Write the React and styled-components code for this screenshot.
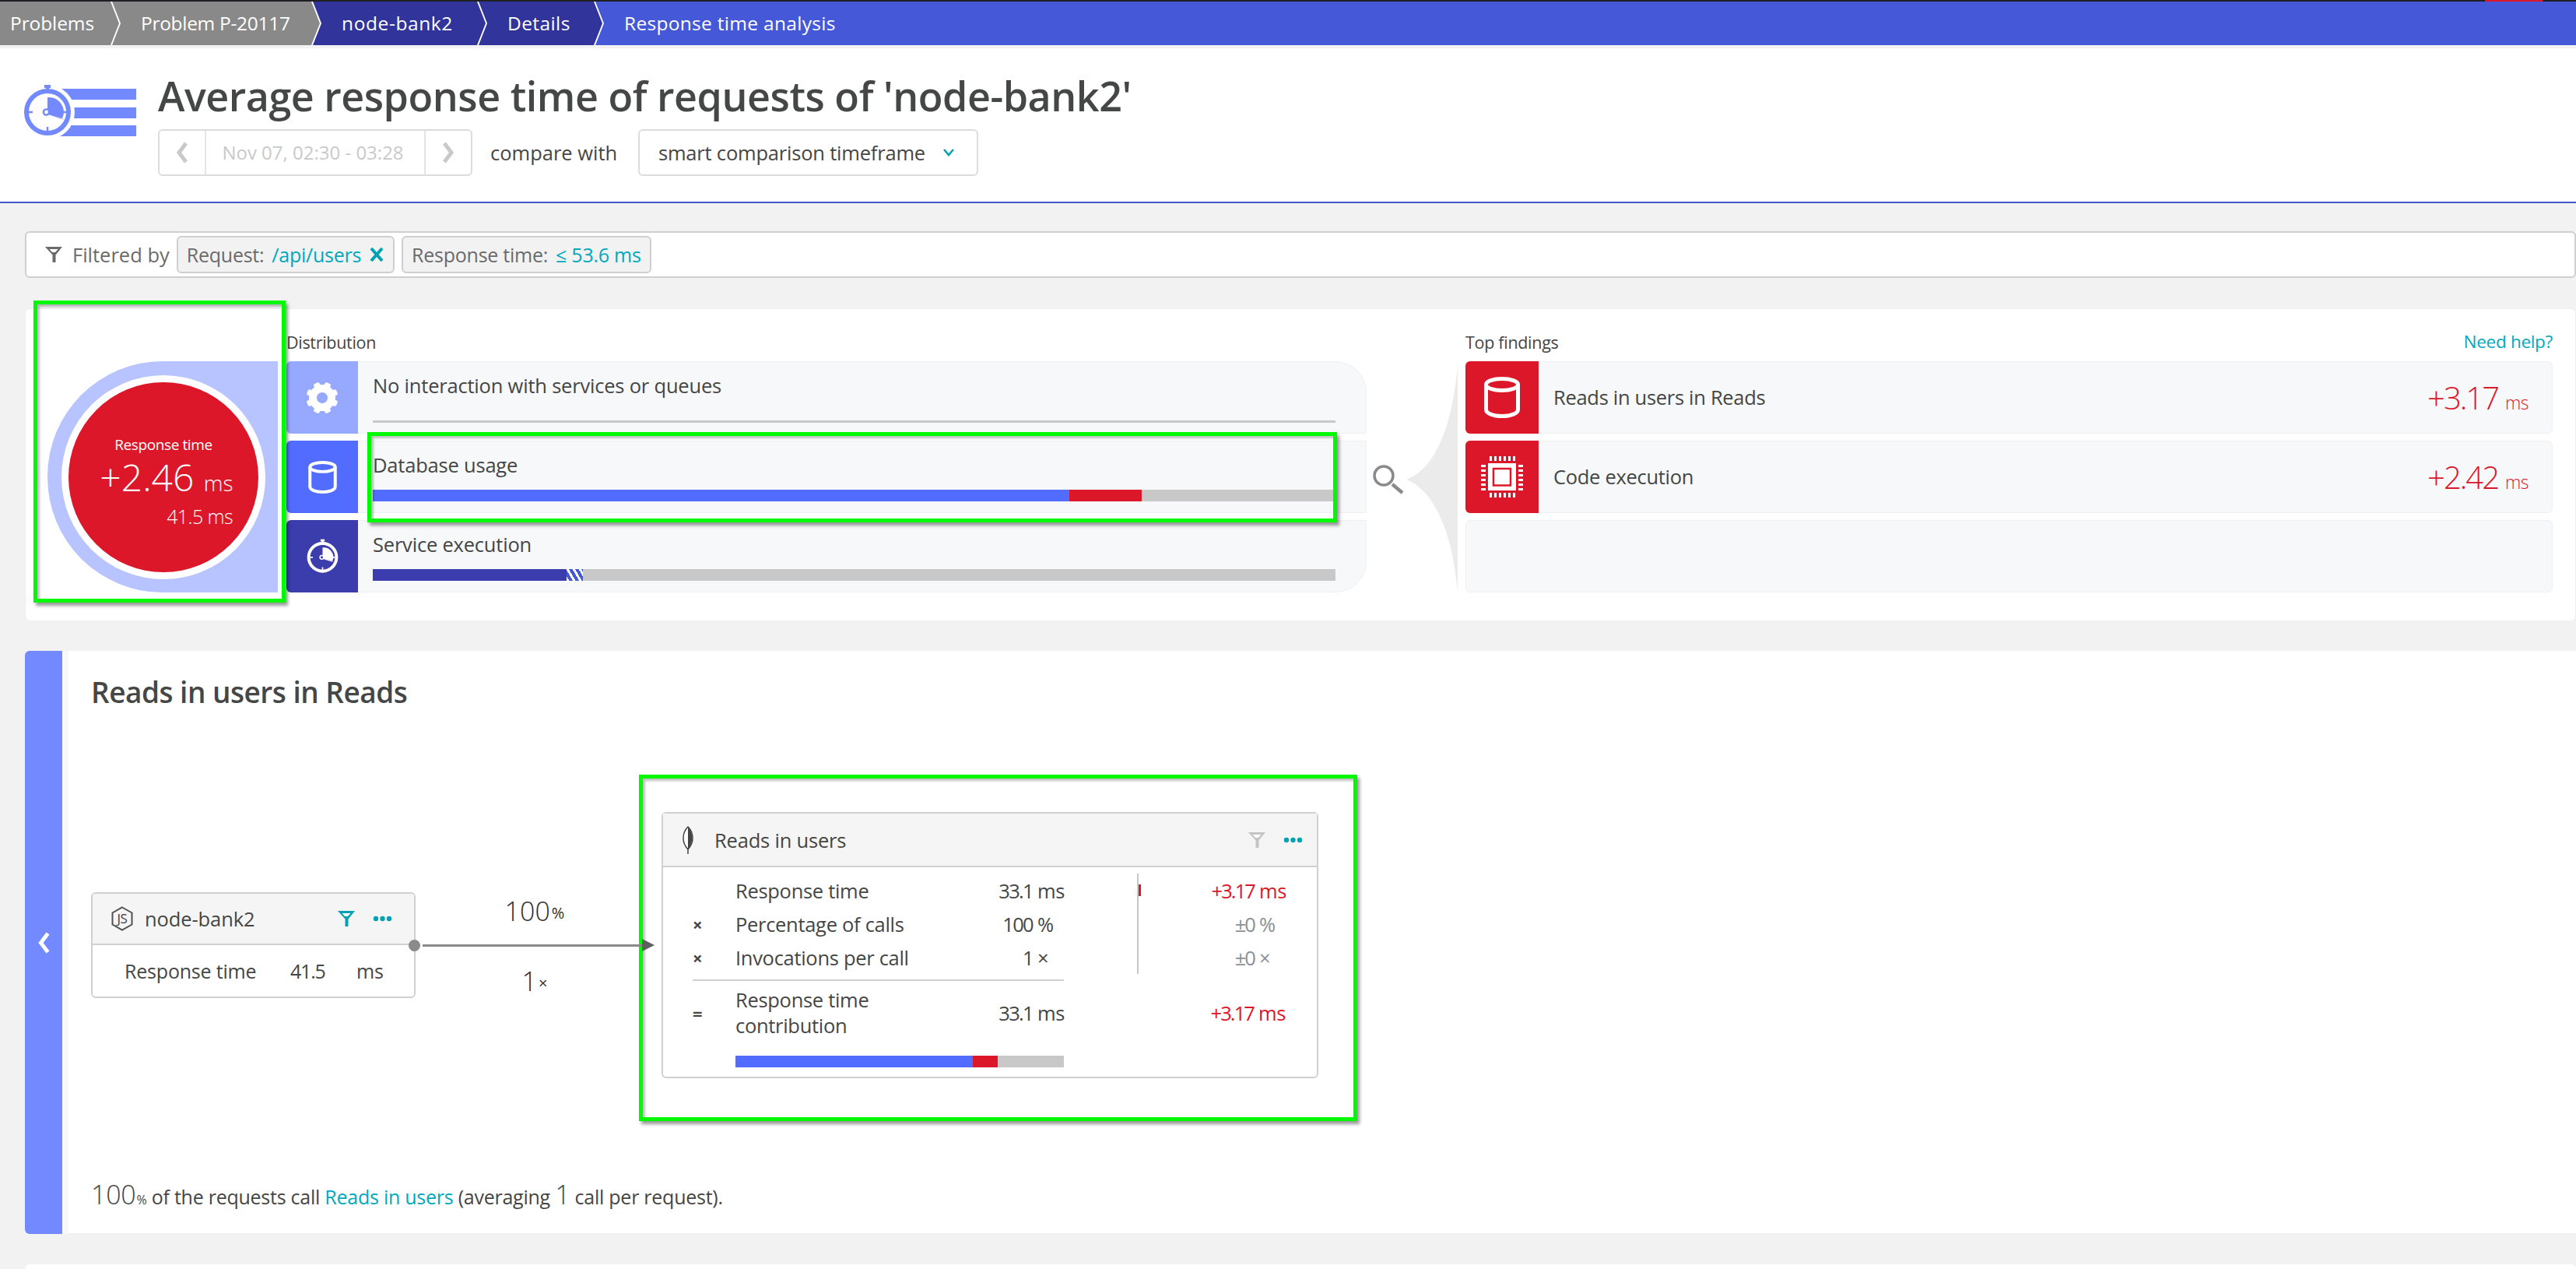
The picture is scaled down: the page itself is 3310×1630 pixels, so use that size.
import React from "react";
import styled, { createGlobalStyle } from "styled-components";

const BLUE = "#7289ff";
const RED = "#dc172a";
const TEAL = "#00a1b2";
const TEXT = "#454646";

const GlobalStyle = createGlobalStyle`
  html, body {
    margin: 0;
    padding: 0;
    background: #f2f2f2;
  }
  * {
    box-sizing: border-box;
  }
`;

const StopwatchGlyph = ({ color, face }) => (
  <>
    <rect x="27" y="1" width="8" height="4" fill={color} />
    <rect x="29" y="4" width="4" height="5" fill={color} />
    <circle cx="31" cy="36" r="27" fill={face} stroke={color} strokeWidth="6" />
    <path d="M31 17 A19 19 0 0 1 50 44 L31 36 Z" fill={color} />
    <path d="M30 34 L53 46 L29 38 Z" fill={color} />
    <path d="M31 60v-5M7 36h5M55 36h-5" stroke={color} strokeWidth="2.5" />
    <circle cx="29.500" cy="36" r="3.6" fill={face} stroke={color} strokeWidth="2.4" />
  </>
);

const HeaderIcon = () => (
  <svg width="146" height="68" viewBox="0 0 146 68">
    <rect x="47" y="6" width="98" height="14" fill={BLUE} />
    <rect x="47" y="30" width="98" height="14" fill={BLUE} />
    <rect x="47" y="53" width="98" height="14" fill={BLUE} />
    <circle cx="31" cy="36" r="35" fill="#fff" />
    <StopwatchGlyph color={BLUE} face="#fff" />
  </svg>
);

const GearIcon = () => (
  <svg width="42" height="42" viewBox="-21 -21 42 42">
    <circle r="12" fill="none" stroke="#fff" strokeWidth="10" />
    {[0, 45, 90, 135, 180, 225, 270, 315].map((a) => (
      <rect key={a} x="-4" y="-20.500" width="8" height="8" rx="2.500" fill="#fff" transform={`rotate(${a + 22.5})`} />
    ))}
  </svg>
);

const DbIcon = ({ width, height }) => (
  <svg width={width} height={height} viewBox="0 0 46 53">
    <ellipse cx="23" cy="10" rx="20.500" ry="7.500" fill="none" stroke="#fff" strokeWidth="5" />
    <path
      d="M2.500 10v32c0 5 9 8.500 20.500 8.500s20.500-3.500 20.500-8.500V10"
      fill="none"
      stroke="#fff"
      strokeWidth="5"
    />
  </svg>
);

const WatchIcon = () => (
  <svg width="41" height="45" viewBox="0 0 62 68">
    <StopwatchGlyph color="#fff" face="#3a3dab" />
  </svg>
);

const chipTicks = [0, 6, 12, 18, 24, 30];

const ChipIcon = () => (
  <svg width="54" height="53" viewBox="0 0 54 53">
    <rect x="9" y="9" width="36" height="35" fill="#fff" />
    <rect x="16" y="16" width="22" height="21.500" fill="#fff" stroke={RED} strokeWidth="2.500" />
    {chipTicks.map((t) => (
      <React.Fragment key={t}>
        <rect x={11 + t} y="0" width="3" height="6" fill="#fff" />
        <rect x={11 + t} y="47" width="3" height="6" fill="#fff" />
        <rect x="0" y={11 + t} width="6" height="3" fill="#fff" />
        <rect x="48" y={11 + t} width="6" height="3" fill="#fff" />
      </React.Fragment>
    ))}
  </svg>
);

const FunnelConnector = () => (
  <svg width="127" height="297" viewBox="0 0 127 297">
    <circle cx="22" cy="147" r="12" fill="none" stroke="#8a8a8a" strokeWidth="3.500" />
    <path d="M33 158 L46 169" stroke="#8a8a8a" strokeWidth="4.500" />
    <path d="M117 4 C110 90 85 140 51 152 C85 165 110 215 117 297 Z" fill="#ebebeb" />
  </svg>
);

const FilterIcon = ({ color, slit = "#fff" }) => (
  <svg width="22" height="22" viewBox="0 0 22 22">
    <path d="M0 1h22l-8.500 10.500V21h-4V11.500z" fill={color} />
    <path d="M5.500 4h11l-3.500 4H9z" fill={slit} />
  </svg>
);

const DotsIcon = () => (
  <svg width="25" height="8" viewBox="0 0 25 8">
    <circle cx="4" cy="4" r="3.200" fill={TEAL} />
    <circle cx="12.500" cy="4" r="3.200" fill={TEAL} />
    <circle cx="21" cy="4" r="3.200" fill={TEAL} />
  </svg>
);

const NodeIcon = () => (
  <svg width="28" height="32" viewBox="0 0 28 32">
    <path d="M14 1.500l12.500 7v15l-12.500 7-12.500-7v-15z" fill="none" stroke="#505050" strokeWidth="2" />
    <text
      x="14"
      y="22"
      textAnchor="middle"
      fontSize="17"
      letterSpacing="-0.5"
      fontFamily="Open Sans, sans-serif"
      fill="#404040"
    >
      JS
    </text>
  </svg>
);

const LeafIcon = () => (
  <svg width="16" height="36" viewBox="0 0 16 36">
    <path d="M8 1C1 8-1 20 8 30c9-10 7-22 0-29z" fill="#fff" stroke="#444" strokeWidth="1.500" />
    <path d="M8 1c6 7 8 19 0 29z" fill="#444" />
    <path d="M8 28v8" stroke="#444" strokeWidth="1.500" />
  </svg>
);

const Chevron = ({ left, color, width = 16, height = 28 }) => (
  <svg width={width} height={height} viewBox="0 0 16 28">
    <path d={left ? "M13 2L4 14l9 12" : "M3 2l9 12L3 26"} fill="none" stroke={color} strokeWidth="5" />
  </svg>
);

const CloseIcon = () => (
  <svg width="20" height="20" viewBox="0 0 20 20">
    <path d="M3 2l14 16M17 2L3 18" stroke={TEAL} strokeWidth="4" />
  </svg>
);

const CaretIcon = () => (
  <svg width="16" height="10" viewBox="0 0 16 10">
    <path d="M2 1l6 7 6-7" fill="none" stroke={TEAL} strokeWidth="2.500" />
  </svg>
);

const crumbs = [
  { label: "Problems", width: 153, bg: "#898989", first: true, spacing: -0.1 },
  { label: "Problem P-20117", width: 267, bg: "#898989", spacing: -0.3 },
  { label: "node-bank2", width: 222, bg: "#30349b", spacing: 0.6 },
  { label: "Details", width: 159, bg: "#30349b", spacing: 0.4 },
  { label: "Response time analysis", bg: "#4458d8", last: true, spacing: 0.3 },
];

const rows = [
  {
    label: "No interaction with services or queues",
    bg: "#97a8ff",
    icon: <GearIcon />,
    corner: "top",
    thin: true,
  },
  {
    label: "Database usage",
    bg: "#526cff",
    icon: <DbIcon width={37} height={42} />,
    marked: true,
    segments: [
      { width: 895, color: "#526cff" },
      { width: 93, color: RED },
    ],
  },
  {
    label: "Service execution",
    bg: "#3a3dab",
    icon: <WatchIcon />,
    corner: "bottom",
    segments: [
      { width: 249, color: "#3a3dab" },
      { width: 21, hatch: true },
    ],
  },
];

const findings = [
  { label: "Reads in users in Reads", value: "+3.17", icon: <DbIcon width={46} height={53} /> },
  { label: "Code execution", value: "+2.42", icon: <ChipIcon /> },
];

const callRows = [
  { op: "", label: "Response time", num: "33.1", unit: "ms", delta: "+3.17", deltaUnit: "ms", hot: true },
  { op: "×", label: "Percentage of calls", num: "100", unit: "%", delta: "±0", deltaUnit: "%" },
  { op: "×", label: "Invocations per call", num: "1", unit: "×", delta: "±0", deltaUnit: "×" },
];

const App = () => {
  return (
    <Page>
      <GlobalStyle />
      <TopStrip>
        <TopAlert />
      </TopStrip>
      <Breadcrumb>
        {crumbs.map((c) => (
          <Crumb
            key={c.label}
            $width={c.width}
            $bg={c.bg}
            $first={c.first}
            $last={c.last}
            $spacing={c.spacing}
          >
            {c.label}
          </Crumb>
        ))}
      </Breadcrumb>

      <Header>
        <HeaderIcon />
        <HeaderMain>
          <Title>Average response time of requests of 'node-bank2'</Title>
          <Controls>
            <TimeBox>
              <TimeArrow>
                <Chevron left color="#c9c9c9" />
              </TimeArrow>
              <TimeLabel>Nov 07, 02:30 - 03:28</TimeLabel>
              <TimeArrow>
                <Chevron color="#c9c9c9" />
              </TimeArrow>
            </TimeBox>
            <CompareLabel>compare with</CompareLabel>
            <Dropdown>
              smart comparison timeframe
              <CaretIcon />
            </Dropdown>
          </Controls>
        </HeaderMain>
      </Header>

      <FilterBar>
        <FilterIcon color="#6b6b6b" />
        <FilterLabel>Filtered by</FilterLabel>
        <Chip>
          Request: <ChipValue>/api/users</ChipValue>
          <CloseIcon />
        </Chip>
        <Chip>
          Response time: <ChipValue>≤ 53.6 ms</ChipValue>
        </Chip>
      </FilterBar>

      <SummaryPanel>
        <GaugeColumn>
          <Gauge>
            <GaugeRing>
              <GaugeDisc>
                <GaugeCaption>Response time</GaugeCaption>
                <GaugeValue>
                  +2.46 <GaugeUnit>ms</GaugeUnit>
                </GaugeValue>
                <GaugeBase>41.5 ms</GaugeBase>
              </GaugeDisc>
            </GaugeRing>
            <Highlight $top={-78} $left={-18} $right={-10} $bottom={-13} />
          </Gauge>
        </GaugeColumn>

        <DistributionColumn>
          <ColumnHead>Distribution</ColumnHead>
          <RowStack>
            {rows.map((r) => (
              <DistRow key={r.label}>
                <IconCell $bg={r.bg}>{r.icon}</IconCell>
                <RowBody $corner={r.corner}>
                  <RowLabel>{r.label}</RowLabel>
                  {r.thin ? (
                    <ThinBar />
                  ) : (
                    <Bar>
                      {r.segments.map((s, i) => (
                        <Segment key={i} $color={s.color} $hatch={s.hatch} style={{ width: s.width }} />
                      ))}
                    </Bar>
                  )}
                  {r.marked && <Highlight $top={-12} $left={12} $right={37} $bottom={-13} />}
                </RowBody>
              </DistRow>
            ))}
          </RowStack>
        </DistributionColumn>

        <ConnectorColumn>
          <FunnelConnector />
        </ConnectorColumn>

        <FindingsColumn>
          <ColumnHead>
            Top findings
            <HelpLink>Need help?</HelpLink>
          </ColumnHead>
          <RowStack>
            {findings.map((f) => (
              <FindingRow key={f.label}>
                <FindingIcon>{f.icon}</FindingIcon>
                <FindingLabel>{f.label}</FindingLabel>
                <FindingValue>
                  {f.value}
                  <FindingUnit>ms</FindingUnit>
                </FindingValue>
              </FindingRow>
            ))}
            <FindingRow />
          </RowStack>
        </FindingsColumn>
      </SummaryPanel>

      <DetailPanel>
        <BackBand>
          <Chevron left color="#fff" width={17} height={28} />
        </BackBand>
        <BandGap />
        <DetailBody>
          <DetailTitle>Reads in users in Reads</DetailTitle>
          <Diagram>
            <CallerGroup>
              <NodeCard>
                <CardHead $height={66} $end={28}>
                  <NodeIcon />
                  <NodeName>node-bank2</NodeName>
                  <FilterIcon color={TEAL} />
                  <DotsIcon />
                </CardHead>
                <NodeBody>
                  <span>Response time</span>
                  <NodeNumber>41.5</NodeNumber>
                  <span>ms</span>
                </NodeBody>
              </NodeCard>
              <Connector>
                <EdgeLabel $height={67} $pad={4}>
                  100<EdgeUnit>%</EdgeUnit>
                </EdgeLabel>
                <EdgeLine />
                <EdgeLabel $height={66} $pad={24}>
                  1<EdgeUnit>×</EdgeUnit>
                </EdgeLabel>
              </Connector>
            </CallerGroup>

            <CallCard>
              <CardHead $height={69} $end={18}>
                <LeafIcon />
                <CallName>Reads in users</CallName>
                <FilterIcon color="#c4c4c4" />
                <DotsIcon />
              </CardHead>
              <CallTable>
                {callRows.map((r) => (
                  <CallRow key={r.label}>
                    <OpCell>{r.op}</OpCell>
                    <span>{r.label}</span>
                    <NumCell>{r.num}</NumCell>
                    <UnitCell>{r.unit}</UnitCell>
                    <span />
                    <DeltaCell>
                      {r.hot && <HotMark />}
                      <DeltaNum $hot={r.hot}>{r.delta}</DeltaNum>
                      <DeltaUnit $hot={r.hot}>{r.deltaUnit}</DeltaUnit>
                    </DeltaCell>
                  </CallRow>
                ))}
                <TableRule />
                <TotalRow>
                  <OpCell>=</OpCell>
                  <TotalLabel>Response time contribution</TotalLabel>
                  <NumCell>33.1</NumCell>
                  <UnitCell>ms</UnitCell>
                  <span />
                  <DeltaPlain>
                    <DeltaNum $hot>+3.17</DeltaNum>
                    <DeltaUnit $hot>ms</DeltaUnit>
                  </DeltaPlain>
                </TotalRow>
                <CallBar>
                  <Segment $color="#526cff" style={{ width: 305 }} />
                  <Segment $color={RED} style={{ width: 32 }} />
                </CallBar>
              </CallTable>
              <Highlight $top={-50} $left={-31} $right={-52} $bottom={-57} />
            </CallCard>
          </Diagram>
          <Footnote>
            <BigDigit>100</BigDigit>
            <SmallUnit>%</SmallUnit> of the requests call <NoteLink>Reads in users</NoteLink> (averaging{" "}
            <BigDigit>1</BigDigit> call per request).
          </Footnote>
        </DetailBody>
      </DetailPanel>
      <NextPanel />
    </Page>
  );
};

const Page = styled.div`
  width: 3310px;
  height: 1630px;
  overflow: hidden;
  background: #f2f2f2;
  color: ${TEXT};
  font-family: "Open Sans", "Liberation Sans", sans-serif;
  font-size: 25.5px;
`;

const TopStrip = styled.div`
  height: 2px;
  background: #1f1f24;
  display: flex;
  justify-content: flex-end;
  padding-right: 43px;
`;

const TopAlert = styled.div`
  width: 74px;
  background: ${RED};
`;

const Breadcrumb = styled.nav`
  height: 56px;
  display: flex;
  background: #fff;
`;

const Crumb = styled.div`
  flex: ${(p) => (p.$width ? `0 0 ${p.$width}px` : "1")};
  margin-left: ${(p) => (p.$first ? 0 : -9)}px;
  padding-left: ${(p) => (p.$first ? 13 : 37)}px;
  background: ${(p) => p.$bg};
  color: #fff;
  font-size: 24.5px;
  letter-spacing: ${(p) => p.$spacing}px;
  line-height: 56px;
  white-space: nowrap;
  clip-path: ${(p) =>
    p.$first
      ? "polygon(0 0, calc(100% - 11px) 0, 100% 50%, calc(100% - 11px) 100%, 0 100%)"
      : p.$last
        ? "polygon(0 0, 100% 0, 100% 100%, 0 100%, 11px 50%)"
        : "polygon(0 0, calc(100% - 11px) 0, 100% 50%, calc(100% - 11px) 100%, 0 100%, 11px 50%)"};
`;

const Header = styled.header`
  margin-top: 4px;
  height: 199px;
  background: #fff;
  border-bottom: 2px solid #4458c8;
  display: flex;
  padding: 46px 0 0 30px;
`;

const HeaderMain = styled.div`
  margin-left: 27px;
  margin-top: -17px;
  display: flex;
  flex-direction: column;
`;

const Title = styled.h1`
  margin: 0;
  font-size: 52px;
  font-weight: 600;
  line-height: 64px;
  letter-spacing: -0.47px;
  color: #454646;
  white-space: nowrap;
`;

const Controls = styled.div`
  margin-top: 11px;
  display: flex;
  align-items: center;
  height: 60px;
`;

const TimeBox = styled.div`
  width: 404px;
  height: 60px;
  display: flex;
  border: 2px solid #dcdcdc;
  border-radius: 6px;
`;

const TimeArrow = styled.div`
  width: 58px;
  display: flex;
  align-items: center;
  justify-content: center;
`;

const TimeLabel = styled.div`
  flex: 1;
  padding-right: 6px;
  border-left: 2px solid #e4e4e4;
  border-right: 2px solid #e4e4e4;
  color: #c9c9c9;
  font-size: 24px;
  line-height: 56px;
  text-align: center;
  white-space: nowrap;
`;

const CompareLabel = styled.span`
  width: 190px;
  margin-left: 23px;
  font-size: 25.5px;
  white-space: nowrap;
`;

const Dropdown = styled.div`
  width: 437px;
  height: 60px;
  display: flex;
  align-items: center;
  justify-content: space-between;
  padding: 0 28px 0 24px;
  border: 2px solid #dcdcdc;
  border-radius: 6px;
  font-size: 25.5px;
  letter-spacing: -0.2px;
  white-space: nowrap;
`;

const FilterBar = styled.div`
  margin: 36px 0 0 32px;
  height: 60px;
  background: #fff;
  border: 2px solid #cfcfcf;
  border-radius: 6px;
  display: flex;
  align-items: center;
  gap: 9px;
  padding-left: 24px;
`;

const FilterLabel = styled.span`
  margin-left: 4px;
  color: #6b6b6b;
  font-size: 25.5px;
  white-space: nowrap;
`;

const Chip = styled.div`
  height: 48px;
  display: flex;
  align-items: center;
  gap: 10px;
  padding: 0 11px;
  background: #f2f2f2;
  border: 2px solid #cfcfcf;
  border-radius: 6px;
  color: #6b6b6b;
  font-size: 25px;
  letter-spacing: -0.25px;
  white-space: nowrap;
`;

const ChipValue = styled.span`
  color: #00a9bd;
`;

const SummaryPanel = styled.section`
  margin: 39px 0 0 32px;
  height: 402px;
  background: #fff;
  border: 1px solid #f0f0f0;
  border-radius: 6px;
  display: flex;
  padding-left: 28px;
`;

const GaugeColumn = styled.div`
  padding-top: 67px;
  margin-right: 11px;
`;

const Gauge = styled.div`
  position: relative;
  width: 296px;
  height: 297px;
  background: #b8c4ff;
  border-radius: 148px 0 0 148px;
  display: flex;
  align-items: center;
  padding-left: 18px;
`;

const GaugeRing = styled.div`
  width: 262px;
  height: 262px;
  border-radius: 50%;
  background: #fff;
  display: flex;
  align-items: center;
  justify-content: center;
`;

const GaugeDisc = styled.div`
  width: 244px;
  height: 244px;
  border-radius: 50%;
  background: ${RED};
  color: #fff;
  display: flex;
  flex-direction: column;
  align-items: center;
  padding-top: 66px;
`;

const GaugeCaption = styled.div`
  font-size: 19px;
  line-height: 28px;
  letter-spacing: -0.4px;
`;

const GaugeValue = styled.div`
  font-size: 48px;
  font-weight: 300;
  line-height: 56px;
  white-space: nowrap;
  margin-left: 8px;
`;

const GaugeUnit = styled.span`
  font-size: 28px;
`;

const GaugeBase = styled.div`
  align-self: flex-end;
  margin-right: 33px;
  font-size: 25px;
  font-weight: 300;
  line-height: 30px;
  letter-spacing: -0.6px;
`;

const Highlight = styled.div`
  position: absolute;
  z-index: 3;
  top: ${(p) => p.$top}px;
  left: ${(p) => p.$left}px;
  right: ${(p) => p.$right}px;
  bottom: ${(p) => p.$bottom}px;
  border: 5px solid #00f800;
  box-shadow: 3px 4px 4px rgba(0, 0, 0, 0.4), inset 3px 3px 3px rgba(0, 0, 0, 0.25);
  pointer-events: none;
`;

const DistributionColumn = styled.div`
  width: 1388px;
`;

const ColumnHead = styled.div`
  height: 67px;
  padding-bottom: 10px;
  display: flex;
  align-items: flex-end;
  justify-content: space-between;
  font-size: 21.5px;
  letter-spacing: -0.3px;
`;

const HelpLink = styled.span`
  color: #00a9bd;
  font-size: 22.5px;
`;

const RowStack = styled.div`
  display: grid;
  grid-auto-rows: 93px;
  row-gap: 9px;
`;

const DistRow = styled.div`
  display: flex;
`;

const IconCell = styled.div`
  width: 92px;
  display: flex;
  align-items: center;
  justify-content: center;
  background: ${(p) => p.$bg};
  border-radius: 6px 0 0 6px;
`;

const RowBody = styled.div`
  position: relative;
  flex: 1;
  padding: 13px 39px 0 19px;
  background: #f6f8f9;
  border: 1px solid #eef0f1;
  border-left: none;
  border-top-right-radius: ${(p) => (p.$corner === "top" ? "40px" : "0")};
  border-bottom-right-radius: ${(p) => (p.$corner === "bottom" ? "40px" : "0")};
`;

const RowLabel = styled.div`
  font-size: 25.5px;
  line-height: 34px;
  letter-spacing: -0.2px;
`;

const ThinBar = styled.div`
  margin-top: 28px;
  height: 3px;
  background: #c8c8c8;
`;

const Bar = styled.div`
  margin-top: 15px;
  height: 15px;
  display: flex;
  background: #c8c8c8;
`;

const Segment = styled.div`
  background: ${(p) =>
    p.$hatch
      ? "repeating-linear-gradient(60deg, #fff, #fff 3px, #4458d8 3px, #4458d8 7px)"
      : p.$color};
`;

const ConnectorColumn = styled.div`
  width: 127px;
  padding-top: 67px;
`;

const FindingsColumn = styled.div`
  width: 1397px;
`;

const FindingRow = styled.div`
  display: flex;
  align-items: center;
  background: #f6f8f9;
  border: 1px solid #eef0f1;
  border-radius: 6px;
`;

const FindingIcon = styled.div`
  align-self: stretch;
  width: 94px;
  margin: -1px 0 -1px -1px;
  display: flex;
  align-items: center;
  justify-content: center;
  background: ${RED};
  border-radius: 6px 0 0 6px;
`;

const FindingLabel = styled.div`
  flex: 1;
  margin: 0 0 2px 19px;
  font-size: 25.5px;
  letter-spacing: -0.3px;
`;

const FindingValue = styled.div`
  margin-right: 30px;
  color: ${RED};
  font-size: 40px;
  font-weight: 300;
  letter-spacing: -2px;
  white-space: nowrap;
`;

const FindingUnit = styled.span`
  margin-left: 9px;
  font-size: 23px;
  letter-spacing: -0.5px;
`;

const DetailPanel = styled.section`
  margin: 38px 0 0 32px;
  height: 749px;
  display: flex;
`;

const BackBand = styled.div`
  width: 48px;
  padding-top: 361px;
  display: flex;
  justify-content: center;
  background: ${BLUE};
  border-radius: 6px 0 0 6px;
`;

const BandGap = styled.div`
  width: 8px;
  background: #f8f8f8;
`;

const DetailBody = styled.div`
  flex: 1;
  display: flex;
  flex-direction: column;
  padding-left: 29px;
  background: #fff;
  border-bottom: 1px solid #ececec;
`;

const DetailTitle = styled.h2`
  margin: 30px 0 0;
  font-size: 37px;
  font-weight: 600;
  line-height: 46px;
  letter-spacing: -0.5px;
`;

const Diagram = styled.div`
  margin-top: 131px;
  display: flex;
  align-items: flex-start;
`;

const CallerGroup = styled.div`
  margin-top: 103px;
  display: flex;
`;

const NodeCard = styled.div`
  width: 417px;
  height: 136px;
  border: 2px solid #d0d0d0;
  border-radius: 6px;
  overflow: hidden;
`;

const CardHead = styled.div`
  height: ${(p) => p.$height}px;
  display: flex;
  align-items: center;
  padding: 0 ${(p) => p.$end}px 0 24px;
  background: #f5f5f5;
  border-bottom: 2px solid #d0d0d0;
  gap: 23px;
`;

const NodeName = styled.span`
  flex: 1;
  margin-left: -8px;
  font-size: 25.5px;
  letter-spacing: -0.1px;
`;

const NodeBody = styled.div`
  height: 66px;
  display: grid;
  grid-template-columns: 213px 85px 40px;
  align-items: center;
  padding-left: 41px;
  font-size: 25px;
  letter-spacing: -0.2px;
`;

const NodeNumber = styled.span`
  letter-spacing: -1.2px;
`;

const Connector = styled.div`
  position: relative;
  width: 316px;
  display: flex;
  flex-direction: column;
  z-index: 4;
`;

const EdgeLabel = styled.div`
  height: ${(p) => p.$height}px;
  display: flex;
  align-items: flex-start;
  justify-content: center;
  padding: ${(p) => p.$pad}px 10px 0 0;
  color: #2f2f2f;
  font-size: 34px;
  font-weight: 300;
  line-height: 40px;
`;

const EdgeUnit = styled.span`
  margin-left: 2px;
  font-size: 20px;
  font-weight: 400;
  line-height: 46px;
`;

const EdgeLine = styled.div`
  position: relative;
  height: 3px;
  margin: 0 25px 0 9px;
  background: #8a8a8a;
  &::before {
    content: "";
    position: absolute;
    left: -18px;
    top: -6px;
    width: 15px;
    height: 15px;
    border-radius: 50%;
    background: #8a8a8a;
  }
  &::after {
    content: "";
    position: absolute;
    right: -16px;
    top: -7px;
    border-left: 16px solid #5f5f5f;
    border-top: 8px solid transparent;
    border-bottom: 8px solid transparent;
  }
`;

const CallCard = styled.div`
  position: relative;
  width: 844px;
  height: 342px;
  border: 2px solid #d0d0d0;
  border-radius: 6px;
`;

const CallName = styled.span`
  flex: 1;
  margin-left: 3px;
  font-size: 25.5px;
  letter-spacing: -0.2px;
`;

const CallTable = styled.div`
  padding: 8px 0 0 38px;
  font-size: 25.5px;
  letter-spacing: -0.3px;
`;

const callGrid = `
  display: grid;
  grid-template-columns: 55px 302px 80px 40px 95px 149px 44px;
  align-items: center;
`;

const CallRow = styled.div`
  ${callGrid}
  height: 43px;
`;

const TotalRow = styled.div`
  ${callGrid}
  height: 78px;
  padding-top: 4px;
`;

const OpCell = styled.span`
  font-weight: 700;
  font-size: 22px;
`;

const NumCell = styled.span`
  text-align: right;
  letter-spacing: -1.7px;
`;

const UnitCell = styled.span`
  padding-left: 6px;
`;

const DeltaCell = styled.div`
  position: relative;
  grid-column: 6 / span 2;
  align-self: stretch;
  display: grid;
  grid-template-columns: 149px 44px;
  align-items: center;
  border-left: 2px solid #c8c8c8;
  margin-left: -1px;
`;

const DeltaPlain = styled.div`
  grid-column: 6 / span 2;
  display: grid;
  grid-template-columns: 149px 44px;
  align-items: center;
`;

const HotMark = styled.span`
  position: absolute;
  left: 0;
  top: 14px;
  width: 3px;
  height: 15px;
  background: ${RED};
`;

const DeltaNum = styled.span`
  text-align: right;
  letter-spacing: -1.9px;
  color: ${(p) => (p.$hot ? RED : "#8a9095")};
`;

const DeltaUnit = styled.span`
  padding-left: 6px;
  color: ${(p) => (p.$hot ? RED : "#8a9095")};
`;

const TableRule = styled.div`
  width: 477px;
  height: 2px;
  margin-top: 7px;
  background: #d0d0d0;
`;

const TotalLabel = styled.span`
  line-height: 33px;
  width: 240px;
`;

const CallBar = styled.div`
  display: flex;
  width: 422px;
  height: 15px;
  margin: 18px 0 0 55px;
  background: #c8c8c8;
`;

const Footnote = styled.div`
  margin-top: auto;
  padding-bottom: 27px;
  display: flex;
  align-items: baseline;
  white-space: pre-wrap;
  font-size: 25px;
  letter-spacing: -0.25px;
`;

const BigDigit = styled.span`
  font-size: 34px;
  font-weight: 300;
  line-height: 46px;
`;

const SmallUnit = styled.span`
  font-size: 16px;
  margin-left: 1px;
`;

const NoteLink = styled.span`
  color: #00a9bd;
`;

const NextPanel = styled.div`
  margin: 39px 0 0 32px;
  height: 40px;
  background: #fff;
  border-radius: 6px;
`;

export default App;
